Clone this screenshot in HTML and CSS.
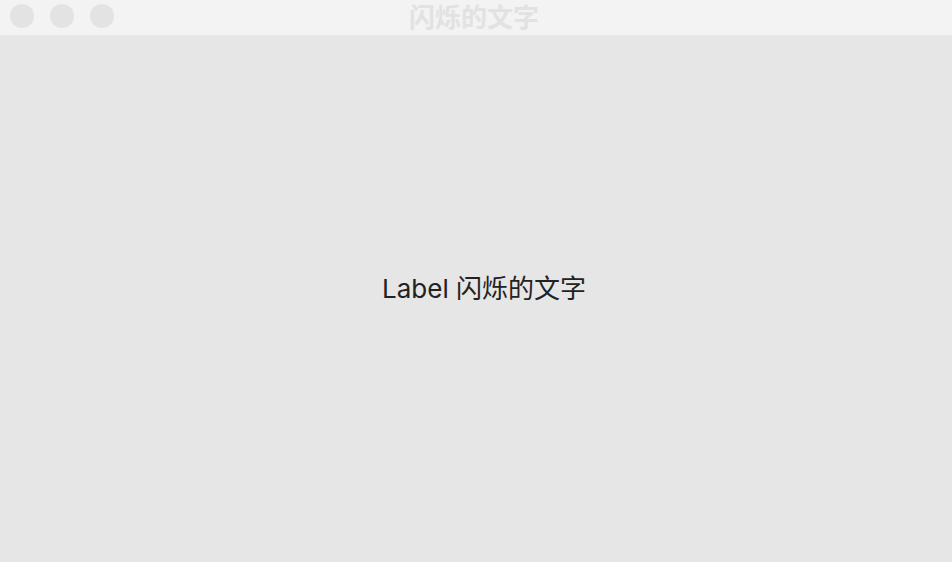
FILE: index.html
```html
<!DOCTYPE html>
<html>
<head>
<meta charset="utf-8">
<link rel="stylesheet" href="styles.css">
</head>
<body>
<div class="window">
  <div class="titlebar">
    <div class="lights">
      <span class="light"></span>
      <span class="light"></span>
      <span class="light"></span>
    </div>
    <div class="title">闪烁的文字</div>
  </div>
  <div class="content">
    <div class="label">Label 闪烁的文字</div>
  </div>
</div>
</body>
</html>
```
FILE: styles.css
```css
html, body {
  margin: 0;
  padding: 0;
  width: 952px;
  height: 562px;
  overflow: hidden;
  font-family: "Noto Sans", "Noto Sans CJK SC", sans-serif;
}
.window {
  display: flex;
  flex-direction: column;
  width: 952px;
  height: 562px;
  background: #e6e6e6;
}
.titlebar {
  position: relative;
  height: 35px;
  flex: 0 0 35px;
  background: #f3f3f3;
  border-bottom: 1px solid #e8e8e8;
  display: flex;
  align-items: center;
}
.lights {
  display: flex;
  gap: 16px;
  padding-left: 10px;
  margin-top: -3px;
}
.light {
  width: 24px;
  height: 24px;
  border-radius: 50%;
  background: #e3e3e3;
}
.title {
  position: absolute;
  left: 0;
  right: 0;
  top: 0;
  height: 34px;
  line-height: 32px;
  text-align: center;
  font-family: "Noto Sans CJK SC", sans-serif;
  font-weight: bold;
  font-size: 26px;
  color: #e2e2e2;
  padding-right: 4px;
}
.content {
  flex: 1;
  display: flex;
  align-items: center;
  justify-content: center;
  padding-left: 16px;
  padding-bottom: 26px;
}
.label {
  font-family: Inter, "Noto Sans CJK SC", sans-serif;
  font-size: 26px;
  color: #222222;
}
```
